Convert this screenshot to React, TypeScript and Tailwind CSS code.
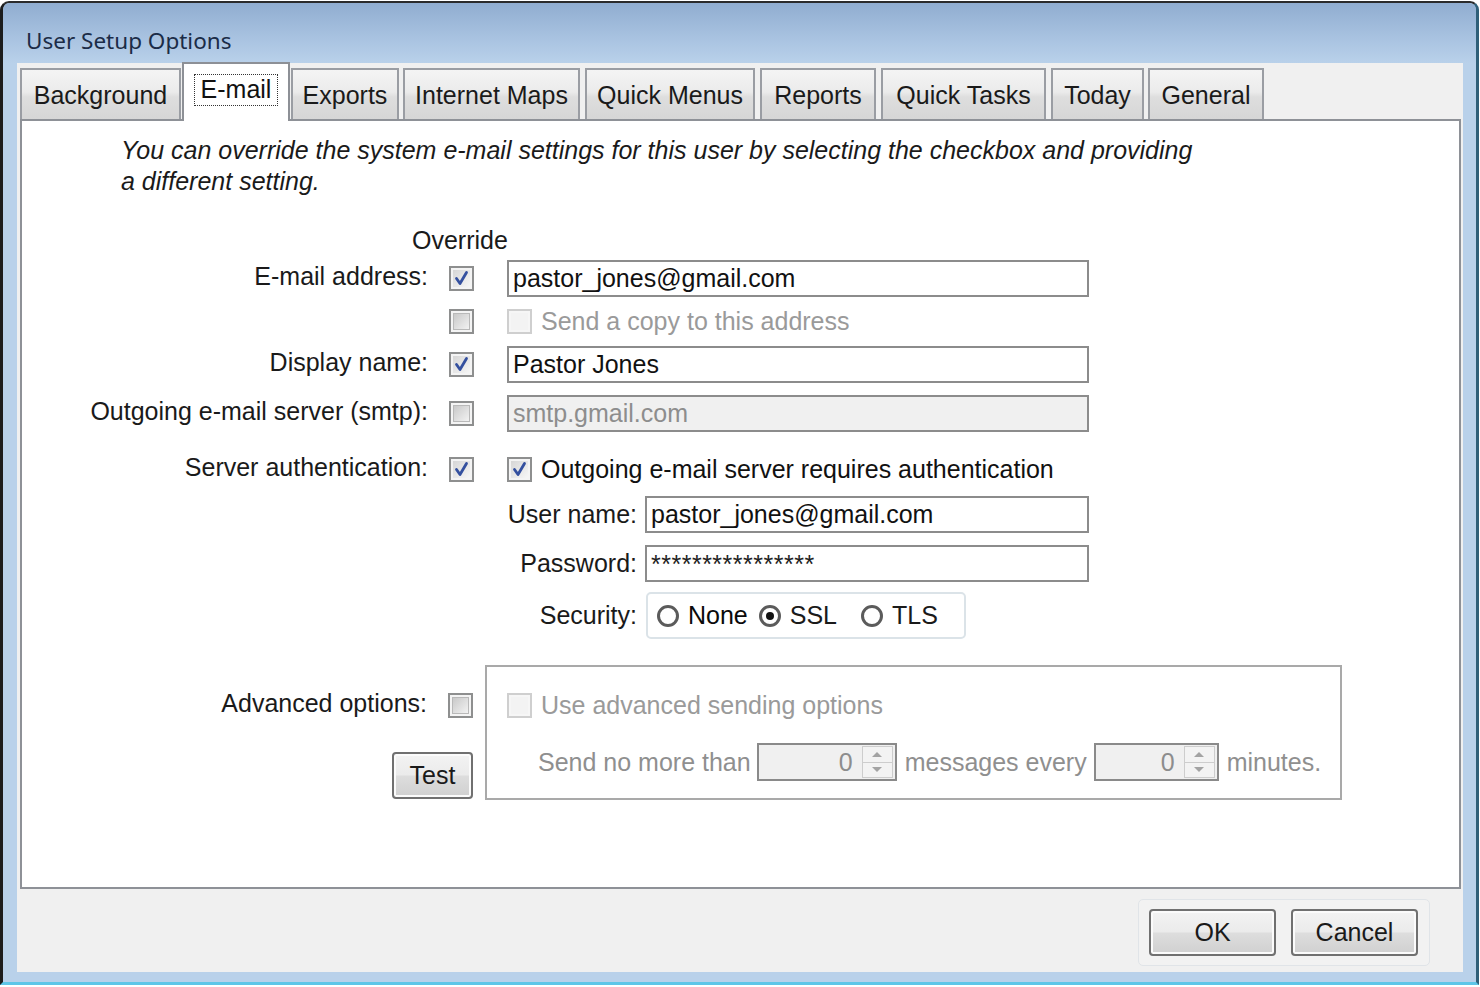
import React from "react";
import clsx from "clsx";

const tabs = [
  { label: "Background", w: "w-[161px]", ml: "ml-0" },
  { label: "E-mail", w: "w-[108px]", ml: "ml-[1px]", active: true },
  { label: "Exports", w: "w-[108px]", ml: "ml-[1px]" },
  { label: "Internet Maps", w: "w-[177px]", ml: "ml-[4px]" },
  { label: "Quick Menus", w: "w-[170px]", ml: "ml-[5px]" },
  { label: "Reports", w: "w-[116px]", ml: "ml-[5px]" },
  { label: "Quick Tasks", w: "w-[165px]", ml: "ml-[5px]" },
  { label: "Today", w: "w-[93px]", ml: "ml-[5px]" },
  { label: "General", w: "w-[116px]", ml: "ml-[4px]" },
];

const btnBg =
  "bg-[linear-gradient(#f3f3f3,#ebebeb_48%,#dddddd_52%,#d0d0d0)] shadow-[inset_0_0_0_2px_#fbfbfb]";

function Check({ checked, disabled }: { checked?: boolean; disabled?: boolean }) {
  return (
    <span
      className={clsx(
        "flex h-[25px] w-[25px] shrink-0 items-center justify-center border-2 p-[2px]",
        disabled ? "border-[#cfcfcf] bg-[#f6f6f6]" : "border-[#8e8f8f] bg-[#f4f4f4]"
      )}
    >
      <span
        className={clsx(
          "relative h-full w-full",
          disabled
            ? "bg-[#f3f3f3]"
            : checked
            ? "bg-[linear-gradient(135deg,#d6d6d6,#f6f6f6)]"
            : "border border-[#b9b9b9] bg-[linear-gradient(135deg,#c9c9c9,#f2f2f2)]"
        )}
      >
        {checked && (
          <svg viewBox="0 0 17 17" className="absolute inset-0 h-full w-full">
            <path
              d="M3.5 8.5 L7 13.5 L13.5 2.5"
              fill="none"
              stroke="#34509f"
              strokeWidth="2.8"
              strokeLinecap="round"
              strokeLinejoin="round"
            />
          </svg>
        )}
      </span>
    </span>
  );
}

function Radio({ checked }: { checked?: boolean }) {
  return (
    <span className="flex h-[22px] w-[22px] shrink-0 items-center justify-center rounded-full border-[3px] border-[#5b5b5b] bg-white">
      {checked && <span className="h-[8px] w-[8px] rounded-full bg-[#111]" />}
    </span>
  );
}

function Field({
  value,
  disabled,
  className,
}: {
  value: string;
  disabled?: boolean;
  className?: string;
}) {
  return (
    <div
      className={clsx(
        "flex h-[37px] items-center border-2 border-[#8c8c8c] pl-[4px] whitespace-nowrap",
        disabled ? "bg-[#f0f0f0] text-[#8d8d8d]" : "bg-white text-[#111]",
        className
      )}
    >
      {value}
    </div>
  );
}

function Spinner({ className }: { className: string }) {
  return (
    <div className={clsx("flex h-[38px] border-2 border-[#8a8a8a] bg-[#f0f0f0]", className)}>
      <span className="flex-1 pr-[9px] text-right leading-[34px] text-[#8d8d8d]">0</span>
      <span className="my-[1px] mr-[2px] flex w-[31px] flex-col border border-[#cdcdcd] bg-[#f3f3f3]">
        <span className="flex flex-1 items-center justify-center border-b border-[#cdcdcd]">
          <span className="h-0 w-0 border-x-[5px] border-b-[5px] border-x-transparent border-b-[#a3a3a3]" />
        </span>
        <span className="flex flex-1 items-center justify-center">
          <span className="h-0 w-0 border-x-[5px] border-t-[5px] border-x-transparent border-t-[#a3a3a3]" />
        </span>
      </span>
    </div>
  );
}

function Row({
  label,
  override,
  className,
  children,
}: {
  label?: string;
  override: boolean;
  className?: string;
  children: React.ReactNode;
}) {
  return (
    <div className={clsx("flex h-[37px] items-center", className)}>
      <div className="w-[406px] pb-[4px] text-right text-[#1a1a1a]">{label}</div>
      <div className="ml-[21px]">
        <Check checked={override} />
      </div>
      <div className="ml-[33px] flex items-center">{children}</div>
    </div>
  );
}

function SubRow({ label, className, children }: { label: string; className?: string; children: React.ReactNode }) {
  return (
    <div className={clsx("flex items-center", className)}>
      <div className="ml-[485px] w-[130px] text-right text-[#1a1a1a]">{label}</div>
      {children}
    </div>
  );
}

function Button({ label, className }: { label: string; className: string }) {
  return (
    <div
      className={clsx(
        "flex h-[47px] items-center justify-center rounded-[4px] border-2 border-[#707070] text-[#1a1a1a]",
        btnBg,
        className
      )}
    >
      {label}
    </div>
  );
}

export default function App() {
  return (
    <div className="h-[987px] w-[1480px] bg-white pt-[1px] font-['Liberation_Sans',Arial,sans-serif] text-[25px] leading-none">
      <div className="flex h-[984px] w-[1479px] flex-col rounded-t-[9px] border-x-[3px] border-t-2 border-b-[3px] border-t-[#2b2b2b] border-l-[#1c1c1c] border-r-[#2f5f78] border-b-[#5ec6e8] bg-[#b9d1ea]">
        {/* title bar */}
        <div className="h-[60px] rounded-t-[7px] bg-[linear-gradient(#90add0,#a9c3e1_60%,#b9d1ea)] pl-[23px] pt-[23px]">
          <span className="font-['Noto_Sans',sans-serif] text-[22.5px] leading-[30px] text-[#1b2c47]">
            User Setup Options
          </span>
        </div>

        <div className="ml-[14px] mr-[13px] flex h-[909px] flex-col bg-[#f0f0f0]">
          {/* tab strip */}
          <div className="flex h-[56px] items-end pl-[3px]">
            {tabs.map((t) =>
              t.active ? (
                <div
                  key={t.label}
                  className={clsx(
                    "relative z-10 -mb-[2px] flex h-[59px] items-center justify-center border-2 border-b-0 border-[#8d9096] bg-white pb-[6px]",
                    t.w,
                    t.ml
                  )}
                >
                  <span className="flex h-[32px] items-center border border-dotted border-[#333] px-[6px] text-[#111]">
                    {t.label}
                  </span>
                </div>
              ) : (
                <div
                  key={t.label}
                  className={clsx(
                    "flex h-[51px] items-center justify-center border-2 border-b-0 border-[#9a9da3] bg-[linear-gradient(#f4f4f4,#ebebeb_45%,#dedede_55%,#d6d6d6)] pt-[2px] text-[#1a1a1a]",
                    t.w,
                    t.ml
                  )}
                >
                  {t.label}
                </div>
              )
            )}
          </div>

          {/* e-mail page */}
          <div className="ml-[3px] mr-[2px] h-[770px] border-2 border-[#8e9197] bg-white">
            <p className="whitespace-nowrap pl-[99px] pt-[14px] italic leading-[31px] text-[#1a1a1a]">
              You can override the system e-mail settings for this user by selecting the checkbox and providing
              <br />a different setting.
            </p>

            <div className="mt-[28px] pl-[390px] leading-[31px] text-[#1a1a1a]">Override</div>

            <Row label="E-mail address:" override className="mt-[4px]">
              <Field value="pastor_jones@gmail.com" className="w-[582px]" />
            </Row>
            <Row override={false} className="mt-[6px]">
              <Check disabled />
              <span className="ml-[9px] text-[#9a9a9a]">Send a copy to this address</span>
            </Row>
            <Row label="Display name:" override className="mt-[6px]">
              <Field value="Pastor Jones" className="w-[582px]" />
            </Row>
            <Row label="Outgoing e-mail server (smtp):" override={false} className="mt-[12px]">
              <Field value="smtp.gmail.com" disabled className="w-[582px]" />
            </Row>
            <Row label="Server authentication:" override className="mt-[19px]">
              <Check checked />
              <span className="ml-[9px] text-[#111]">Outgoing e-mail server requires authentication</span>
            </Row>

            <SubRow label="User name:" className="mt-[8px]">
              <Field value="pastor_jones@gmail.com" className="ml-[8px] w-[444px]" />
            </SubRow>
            <SubRow label="Password:" className="mt-[12px]">
              <div className="ml-[8px] h-[37px] w-[444px] border-2 border-[#8c8c8c] bg-white pl-[4px] pt-[5px] text-[25px] leading-none tracking-[0.5px] text-[#222]">
                ****************
              </div>
            </SubRow>
            <SubRow label="Security:" className="mt-[10px]">
              <div className="ml-[9px] flex h-[47px] w-[320px] items-center rounded-[5px] border-2 border-[#dbe3e8] pl-[9px]">
                <Radio />
                <span className="ml-[9px] text-[#0a0a0a]">None</span>
                <span className="ml-[11px]">
                  <Radio checked />
                </span>
                <span className="ml-[9px] text-[#1a1a1a]">SSL</span>
                <span className="ml-[24px]">
                  <Radio />
                </span>
                <span className="ml-[9px] text-[#1a1a1a]">TLS</span>
              </div>
            </SubRow>

            {/* advanced options */}
            <div className="mt-[26px] flex">
              <div className="flex w-[451px] flex-col">
                <div className="mt-[22px] flex h-[37px] items-center">
                  <div className="w-[406px] pb-[4px] text-right text-[#1a1a1a]">Advanced options:</div>
                  <div className="ml-[21px]">
                    <Check />
                  </div>
                </div>
                <Button label="Test" className="mt-[28px] w-[81px] self-end" />
              </div>
              <div className="ml-[12px] h-[135px] w-[857px] border-2 border-[#a9a9a9] pl-[20px] pt-[20px]">
                <div className="flex h-[37px] items-center">
                  <Check disabled />
                  <span className="ml-[9px] text-[#9a9a9a]">Use advanced sending options</span>
                </div>
                <div className="mt-[19px] ml-[31px] flex h-[38px] items-center whitespace-nowrap text-[#8f8f8f]">
                  <span>Send no more than</span>
                  <Spinner className="ml-[6px] w-[140px]" />
                  <span className="ml-[8px]">messages every</span>
                  <Spinner className="ml-[7px] w-[125px]" />
                  <span className="ml-[8px]">minutes.</span>
                </div>
              </div>
            </div>
          </div>

          {/* dialog buttons */}
          <div className="flex justify-end pr-[33px] pt-[10px]">
            <div className="flex h-[67px] items-start gap-[15px] rounded-[5px] border border-[#e0e4e8] bg-[#f2f2f2] pl-[10px] pr-[11px] pt-[9px]">
              <Button label="OK" className="w-[127px]" />
              <Button label="Cancel" className="w-[127px]" />
            </div>
          </div>
        </div>
      </div>
    </div>
  );
}
